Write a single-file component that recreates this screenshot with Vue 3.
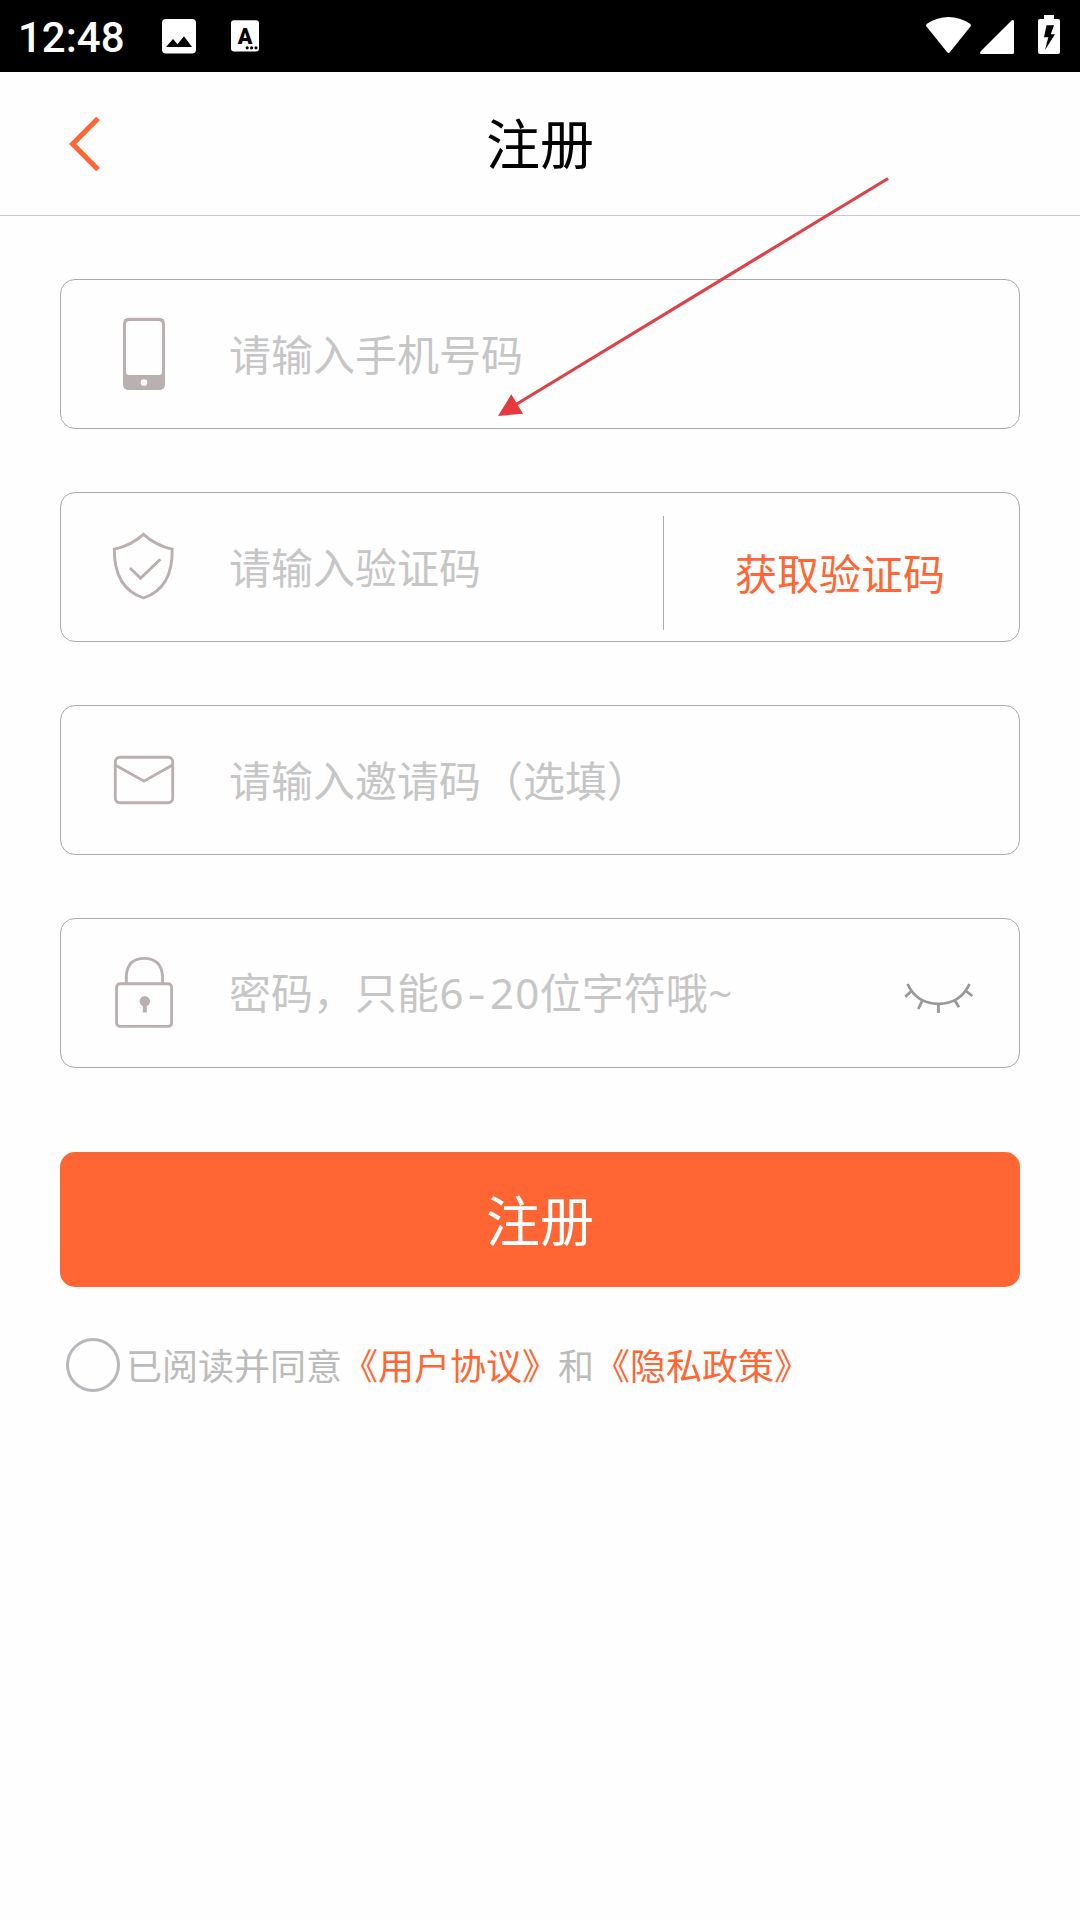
<script setup>
import { ref } from 'vue'

const agreed = ref(false)

// 密码提示中的等宽字符
const range = ['6', '-', '2', '0']

const toggleAgree = () => {
  agreed.value = !agreed.value
}
</script>

<template>
  <div class="page">
    <!-- 状态栏 -->
    <div class="status-bar">
      <span class="time">12:48</span>
      <svg class="status-left" width="110" height="72" viewBox="156 0 110 72">
        <rect x="162" y="19" width="34" height="34.5" rx="4" fill="#fff" />
        <path d="M166 47L173 39L177.5 44.3L184 36.3L192 47Z" fill="#000" />
        <rect x="231" y="20.3" width="28" height="31.2" rx="3" fill="#fff" />
        <text x="245" y="43.5" class="badge-letter" text-anchor="middle">A</text>
        <circle cx="247.2" cy="47.8" r="1.6" />
        <circle cx="251.6" cy="47.8" r="1.6" />
        <circle cx="256" cy="47.8" r="1.6" />
      </svg>
      <svg class="status-right" width="140" height="72" viewBox="920 0 140 72">
        <path d="M926.5 26.5Q925.3 25 927 23.8Q937 17 948.5 17Q960 17 970 23.8Q971.7 25 970.5 26.5L950 52Q948.5 53.8 947 52Z" fill="#fff" />
        <path d="M981 51L1011.3 20.7Q1014 18.8 1014 21.8V52.5Q1014 54 1012.5 54H981.5Q978.8 53.6 981 51Z" fill="#fff" />
        <path d="M1044 15H1054V19H1058Q1060 19 1060 21V52Q1060 54 1058 54H1040Q1038 54 1038 52V21Q1038 19 1040 19H1044Z" fill="#fff" />
        <path d="M1046.5 25.3H1054L1050.8 34.3H1055L1045 50L1048.3 37.3H1044Z" fill="#000" />
      </svg>
    </div>

    <!-- 标题栏 -->
    <header class="header">
      <svg class="back" width="36" height="60" viewBox="0 0 36 60">
        <path d="M30 4.5L4.7 30L30 55.5" fill="none" stroke="#ff6633" stroke-width="5.2" />
      </svg>
      <h1 class="title">注册</h1>
    </header>

    <main class="form">
      <div class="field">
        <svg class="icon" viewBox="0 0 84 84">
          <path fill-rule="evenodd" d="M27 5.8H57Q63 5.8 63 11.8V72Q63 78 57 78H27Q21 78 21 72V11.8Q21 5.8 27 5.8ZM27.5 9Q24 9 24 12.5V60Q24 63 27 63H57Q60 63 60 60V12.5Q60 9 56.5 9Z" fill="#b9b0af" />
          <circle cx="42" cy="70.5" r="3.3" fill="#fff" />
        </svg>
        <span class="placeholder">请输入手机号码</span>
      </div>

      <div class="field">
        <svg class="icon line" viewBox="0 0 84 84">
          <path d="M41.5 9.3Q54 20.5 70.2 24.2Q71 63 41.5 73Q12 63 12.3 24.2Q29 20.5 41.5 9.3Z" />
          <path d="M28 43L38.5 53.2L58.3 34.2" />
        </svg>
        <span class="placeholder">请输入验证码</span>
        <span class="code">获取验证码</span>
      </div>

      <div class="field">
        <svg class="icon line" viewBox="0 0 84 84">
          <rect x="13.3" y="19.3" width="57.4" height="45.4" rx="4.5" />
          <path d="M14 27.5L42 43.2L70.5 27" />
        </svg>
        <span class="placeholder">请输入邀请码（选填）</span>
      </div>

      <div class="field">
        <svg class="icon line" viewBox="0 0 84 84">
          <rect x="14.6" y="32.8" width="55" height="42.6" rx="3.5" />
          <path d="M24.3 32V25Q25.5 7.4 42.2 7.4Q59 7.4 60.6 25V32" />
          <circle cx="42.8" cy="50.2" r="5.2" class="keyhole" />
          <path d="M42.8 50V61.5" class="stem" />
        </svg>
        <span class="placeholder">密码，只能<span v-for="c in range" :key="c" class="mono" :class="{ dash: c === '-' }">{{ c }}</span>位字符哦<span class="mono tilde">~</span></span>
        <svg class="eye" width="76" height="40" viewBox="900 979 76 40">
          <path d="M907.5 984C914 998 925 1003.8 938.5 1003.8C952 1003.8 963 998 969.5 984" />
          <path d="M912 990.5L905.3 996.8M922.3 1000.5L918.3 1009M938.5 1004V1013M954.8 1000.5L959 1007.3M966 991L972.3 996" />
        </svg>
      </div>

      <button class="submit" type="button">注册</button>

      <div class="agreement">
        <span class="radio" :class="{ checked: agreed }" @click="toggleAgree"></span>
        <span class="terms">已阅读并同意<a class="link">《用户协议》</a>和<a class="link">《隐私政策》</a></span>
      </div>
    </main>

    <!-- 指示箭头 -->
    <svg class="arrow" width="400" height="250" viewBox="494 172 400 250">
      <path d="M888 178.5L516 404.5" fill="none" stroke="#dc4247" stroke-width="3.2" />
      <path d="M498 416L511.3 394.3L523 413.7Z" fill="#e6393d" />
    </svg>
  </div>
</template>

<style>
body {
  margin: 0;
  background: #fefefe;
}
</style>

<style scoped>
* {
  box-sizing: border-box;
}

.page {
  position: relative;
  width: 1080px;
  height: 1920px;
  overflow: hidden;
  background: #fefefe;
  font-family: "Noto Sans CJK SC", sans-serif;
}

.status-bar {
  display: flex;
  align-items: center;
  height: 72px;
  padding: 0 20px 0 18px;
  background: #000;
}

.time {
  width: 138px;
  padding-top: 4px;
  color: #fff;
  font: 500 42px/50px Roboto, sans-serif;
}

.status-right {
  margin-left: auto;
}

.badge-letter {
  font: 900 21.5px Roboto, sans-serif;
}

.header {
  display: grid;
  grid-template-columns: 180px 1fr 180px;
  align-items: center;
  height: 144px;
  border-bottom: 1px solid #c8c8c8;
}

.back {
  margin-left: 68px;
}

.title {
  margin: 0;
  padding-bottom: 4px;
  text-align: center;
  color: #000;
  font-size: 54px;
  font-weight: 400;
  line-height: 80px;
}

.form {
  display: flex;
  flex-direction: column;
  gap: 63px;
  padding: 63px 60px 0;
}

.field {
  display: flex;
  align-items: center;
  height: 150px;
  padding-left: 41px;
  border: 1px solid #aaa;
  border-radius: 15px;
}

.icon {
  width: 84px;
  height: 84px;
  margin-right: 43px;
}

.line {
  fill: none;
  stroke: #b9b0af;
  stroke-width: 2.9;
}

.line .keyhole {
  fill: #b9b0af;
  stroke: none;
}

.line .stem {
  stroke-width: 4;
}

.placeholder {
  padding-bottom: 2px;
  color: #c6c6c6;
  font-size: 42px;
  font-weight: 400;
  line-height: 60px;
  white-space: nowrap;
}

.mono {
  display: inline-block;
  width: 25.2px;
  text-align: center;
  font-family: "Noto Sans", sans-serif;
}

.dash {
  transform: scaleX(1.35);
}

.code {
  display: flex;
  align-items: center;
  height: 114px;
  margin-top: 12px;
  margin-left: auto;
  padding: 0 74px 3px 71px;
  border-left: 1px solid #aaa;
  color: #ff6633;
  font-size: 42px;
}

.eye {
  margin: 12px 43px 0 auto;
  fill: none;
  stroke: #999;
  stroke-width: 2.8;
}

.submit {
  height: 135px;
  margin-top: 21px;
  padding: 0 0 3px;
  border: 0;
  border-radius: 15px;
  background: #ff6633;
  color: #fff;
  font-family: inherit;
  font-size: 54px;
}

.agreement {
  display: flex;
  align-items: center;
  gap: 6px;
  height: 54px;
  margin-top: -12px;
  padding-left: 6px;
  color: #bbb;
  font-size: 36px;
  white-space: nowrap;
}

.terms {
  padding-bottom: 2px;
}

.radio {
  width: 54px;
  height: 54px;
  border: 3px solid #b8b8bc;
  border-radius: 50%;
}

.radio.checked {
  background: #ff6633;
}

.link {
  color: #ff6633;
}

.arrow {
  position: absolute;
  left: 494px;
  top: 172px;
  pointer-events: none;
}
</style>
